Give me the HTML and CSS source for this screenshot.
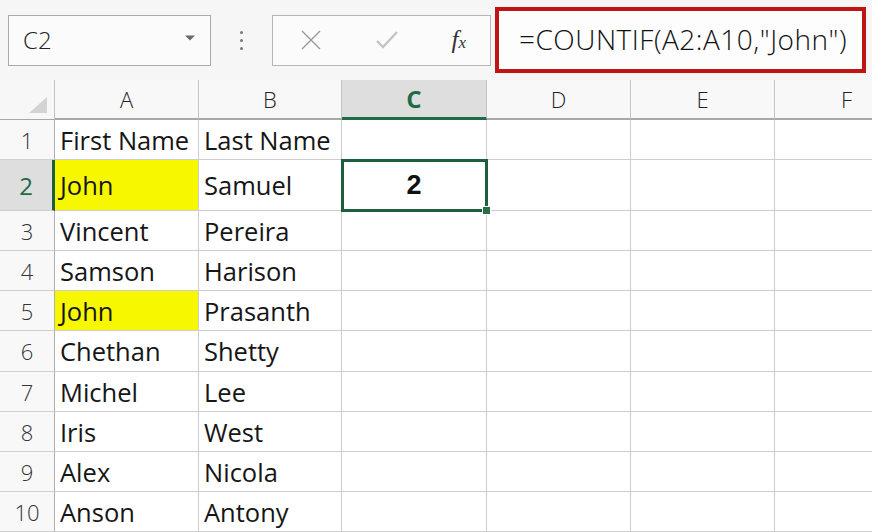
FILE: index.html
```html
<!DOCTYPE html>
<html lang="en">
<head>
    <meta charset="UTF-8">
    <meta name="viewport" content="width=device-width, initial-scale=1.0">
    <title>COUNTIF example</title>
    <link rel="stylesheet" href="styles.css">
</head>
<body>
    <div class="toolbar">
        <div class="namebox">
            <span>C2</span>
            <svg class="arrow" width="12" height="8" viewBox="0 0 12 8"><path d="M1 1.5 L11 1.5 L6 6.5 Z" fill="#6a6a6a"/></svg>
        </div>
        <div class="dots"><i></i><i></i><i></i></div>
        <div class="fxbox">
            <svg width="22" height="22" viewBox="0 0 22 22"><path d="M2 2 L20 20 M20 2 L2 20" stroke="#9a9a9a" stroke-width="1.4" fill="none"/></svg>
            <svg width="24" height="20" viewBox="0 0 24 20"><path d="M2 11 L8 17 L22 2" stroke="#c4c4c4" stroke-width="2.4" fill="none"/></svg>
            <span class="fx">f<sub>x</sub></span>
        </div>
        <div class="formula">=COUNTIF(A2:A10,"John")</div>
    </div>

    <div class="sheet">
        <div class="corner"><span class="tri"></span></div>
        <div class="colhead">A</div>
        <div class="colhead">B</div>
        <div class="colhead active">C</div>
        <div class="colhead">D</div>
        <div class="colhead">E</div>
        <div class="colhead cut">F</div>

        <div class="rowhead">1</div>
        <div class="cell">First Name</div>
        <div class="cell">Last Name</div>
        <div class="cell"></div><div class="cell"></div><div class="cell"></div><div class="cell"></div>

        <div class="rowhead active">2</div>
        <div class="cell yellow">John</div>
        <div class="cell">Samuel</div>
        <div class="cell selected">2</div>
        <div class="cell"></div><div class="cell"></div><div class="cell"></div>

        <div class="rowhead">3</div>
        <div class="cell">Vincent</div>
        <div class="cell">Pereira</div>
        <div class="cell"></div><div class="cell"></div><div class="cell"></div><div class="cell"></div>

        <div class="rowhead">4</div>
        <div class="cell">Samson</div>
        <div class="cell">Harison</div>
        <div class="cell"></div><div class="cell"></div><div class="cell"></div><div class="cell"></div>

        <div class="rowhead">5</div>
        <div class="cell yellow">John</div>
        <div class="cell">Prasanth</div>
        <div class="cell"></div><div class="cell"></div><div class="cell"></div><div class="cell"></div>

        <div class="rowhead">6</div>
        <div class="cell">Chethan</div>
        <div class="cell">Shetty</div>
        <div class="cell"></div><div class="cell"></div><div class="cell"></div><div class="cell"></div>

        <div class="rowhead">7</div>
        <div class="cell">Michel</div>
        <div class="cell">Lee</div>
        <div class="cell"></div><div class="cell"></div><div class="cell"></div><div class="cell"></div>

        <div class="rowhead">8</div>
        <div class="cell">Iris</div>
        <div class="cell">West</div>
        <div class="cell"></div><div class="cell"></div><div class="cell"></div><div class="cell"></div>

        <div class="rowhead">9</div>
        <div class="cell">Alex</div>
        <div class="cell">Nicola</div>
        <div class="cell"></div><div class="cell"></div><div class="cell"></div><div class="cell"></div>

        <div class="rowhead">10</div>
        <div class="cell">Anson</div>
        <div class="cell">Antony</div>
        <div class="cell"></div><div class="cell"></div><div class="cell"></div><div class="cell"></div>
    </div>
</body>
</html>
```

FILE: styles.css
```css
body {
    margin: 0;
    background-color: #fff;
    font-family: "Open Sans", "Noto Sans", sans-serif;
    color: #1a1a1a;
    overflow: hidden;
}
.toolbar {
    height: 80px;
    background-color: #f6f6f6;
    display: flex;
    align-items: center;
    box-sizing: border-box;
    padding-left: 8px;
}
.namebox {
    width: 203px;
    height: 51px;
    box-sizing: border-box;
    border: 1px solid #ababab;
    background-color: #fbfbfb;
    display: flex;
    align-items: center;
    justify-content: space-between;
    padding: 0 14px 2px 14px;
    font-size: 24px;
    font-weight: 300;
    color: #222;
}
.namebox .arrow {
    margin-top: -2px;
}
.dots {
    width: 61px;
    display: flex;
    flex-direction: column;
    align-items: center;
    gap: 5px;
}
.dots i {
    width: 3px;
    height: 3px;
    border-radius: 50%;
    background-color: #777;
}
.fxbox {
    width: 219px;
    height: 51px;
    box-sizing: border-box;
    border: 1px solid #b5b5b5;
    background-color: #fbfbfb;
    display: flex;
    align-items: center;
    justify-content: space-between;
    padding: 0 24px 0 27px;
}
.fx {
    font-family: "Liberation Serif", serif;
    font-style: italic;
    font-size: 25px;
    color: #333;
}
.fx sub {
    font-size: 17px;
    vertical-align: 0;
}
.formula {
    margin-left: 4px;
    width: 371px;
    height: 66px;
    box-sizing: border-box;
    border: 4px solid #c01515;
    background-color: #fdfdfd;
    display: flex;
    align-items: center;
    padding-left: 20px;
    padding-bottom: 2px;
    font-size: 28px;
    letter-spacing: 0.5px;
    font-weight: 300;
    color: #111;
    white-space: nowrap;
}
.sheet {
    display: grid;
    grid-template-columns: 55px 144px 143px 145px 144px 144px 97px;
    grid-template-rows: 40px 40px 51px 40px 40px 40px 41px 40px 40px 40px 40px;
}
.corner {
    background-color: #f7f7f7;
    border-right: 1px solid #c4c4c4;
    border-bottom: 1px solid #a8a8a8;
    position: relative;
}
.tri {
    position: absolute;
    right: 7px;
    bottom: 6px;
    width: 0;
    height: 0;
    border-left: 18px solid transparent;
    border-bottom: 16px solid #d3d3d3;
}
.colhead {
    background-color: #f8f8f8;
    border-right: 1px solid #c4c4c4;
    border-bottom: 2px solid #a8a8a8;
    display: flex;
    align-items: center;
    justify-content: center;
    font-size: 22px;
    font-weight: 300;
    color: #222;
}
.colhead.cut {
    justify-content: flex-start;
    padding-left: 66px;
    border-right: none;
}
.colhead.active {
    background-color: #dedede;
    border-bottom: 3px solid #1f6b45;
    color: #1f6b45;
    font-weight: 700;
    font-size: 24px;
}
.rowhead {
    background-color: #f8f8f8;
    border-right: 1px solid #b0b0b0;
    border-bottom: 1px solid #cfcfcf;
    display: flex;
    align-items: center;
    justify-content: center;
    font-size: 22px;
    font-weight: 300;
    color: #333;
}
.rowhead.active {
    background-color: #dedede;
    border-right: 3px solid #1f5c3c;
    color: #1f6b45;
    font-weight: 400;
    font-size: 24px;
}
.cell {
    border-right: 1px solid #cdcdcd;
    border-bottom: 1px solid #cdcdcd;
    display: flex;
    align-items: center;
    padding-left: 5px;
    font-size: 25.5px;
    white-space: nowrap;
    overflow: hidden;
    color: #161616;
}
.cell:nth-child(7n) {
    border-right: none;
}
.yellow {
    background-color: #f7f700;
}
.selected {
    position: relative;
    overflow: visible;
    justify-content: center;
    padding-left: 0;
    outline: 3px solid #1d5e3d;
    outline-offset: -2px;
    font-family: "Liberation Sans", sans-serif;
    font-weight: 700;
    font-size: 27px;
    color: #111;
    z-index: 1;
}
.selected::after {
    content: "";
    position: absolute;
    right: -5px;
    bottom: -5px;
    width: 7px;
    height: 7px;
    background-color: #2a6e47;
    border: 1px solid #fff;
}
```
